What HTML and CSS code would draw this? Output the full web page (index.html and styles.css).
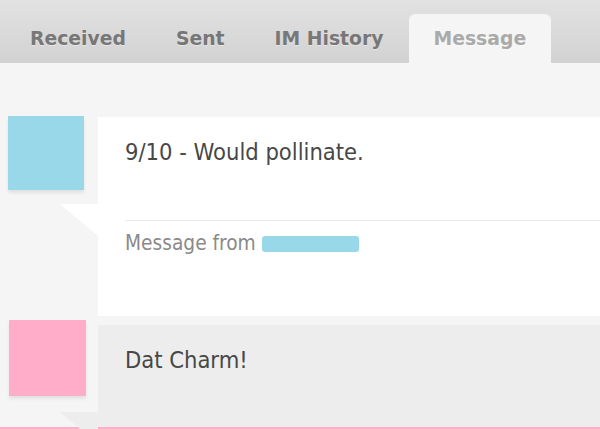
FILE: index.html
```html
<!DOCTYPE html>
<html>
<head>
<meta charset="utf-8">
<link rel="stylesheet" href="styles.css">
</head>
<body>
<div class="tabs">
  <a class="tab">Received</a>
  <a class="tab">Sent</a>
  <a class="tab">IM History</a>
  <a class="tab active">Message</a>
</div>
<div class="content">
  <div class="msg msg-first">
    <div class="avatar blue"></div>
    <div class="card white">
      <div class="text">9/10 - Would pollinate.</div>
      <div class="footer">Message from <span class="redact"></span></div>
    </div>
  </div>
  <div class="msg msg-second">
    <div class="avatar pink"></div>
    <div class="card grey">
      <div class="text">Dat Charm!</div>
    </div>
  </div>
  <div class="sep"></div>
</div>
</body>
</html>
```
FILE: styles.css
```css
html, body {
  margin: 0;
  padding: 0;
}
body {
  background: #f5f5f5;
  overflow: hidden;
  height: 429px;
  font-family: "DejaVu Sans", sans-serif;
}
.tabs {
  display: flex;
  height: 63px;
  box-sizing: border-box;
  padding: 14px 0 0 5px;
  background: linear-gradient(#e2e2e2, #d2d2d2);
}
.tab {
  padding: 0 25px;
  line-height: 49px;
  font-size: 18.8px;
  font-weight: bold;
  color: #777;
  text-shadow: 0 1px 0 rgba(255,255,255,0.4);
}
.tab.active {
  background: #f5f5f5;
  color: #aaa;
  border-radius: 6px 6px 0 0;
}
.content {
  padding-top: 53px;
}
.msg {
  display: flex;
  align-items: flex-start;
}
.avatar {
  flex-shrink: 0;
  width: 76px;
  height: 74px;
  margin-left: 8px;
  margin-right: 14px;
  box-shadow: 0 3px 3px rgba(0,0,0,0.08);
}
.avatar.blue { background: #99d8e8; }
.avatar.pink { background: #ffadc8; width: 77px; height: 76px; margin-left: 9px; margin-right: 12px; }
.card {
  flex: 1;
  position: relative;
  padding-left: 27px;
  font-family: "DejaVu Sans Condensed", "DejaVu Sans", sans-serif;
  font-stretch: condensed;
}
.card::before {
  content: "";
  position: absolute;
  left: -38px;
  top: 87px;
  width: 38px;
  height: 32px;
  background: inherit;
  clip-path: polygon(0 0, 100% 0, 100% 100%);
}
.card.white { background: #fff; }
.card.grey { background: #ededed; }
.msg-first .card { margin-top: 1px; }
.msg-second { margin-top: 4px; }
.msg-second .card { margin-top: 5px; padding-bottom: 52px; }
.text {
  padding-top: 20px;
  font-size: 23.5px;
  line-height: 30px;
  color: #474747;
}
.footer {
  margin-top: 53px;
  border-top: 1px solid #e9e9e9;
  padding: 9px 0 60px;
  font-size: 20.7px;
  line-height: 26px;
  color: #8a8a8a;
}
.redact {
  display: inline-block;
  width: 97px;
  height: 16px;
  vertical-align: -2px;
  background: #99d8e8;
  border-radius: 3px;
}
.sep {
  height: 2px;
  background: #ffadc8;
}
```
